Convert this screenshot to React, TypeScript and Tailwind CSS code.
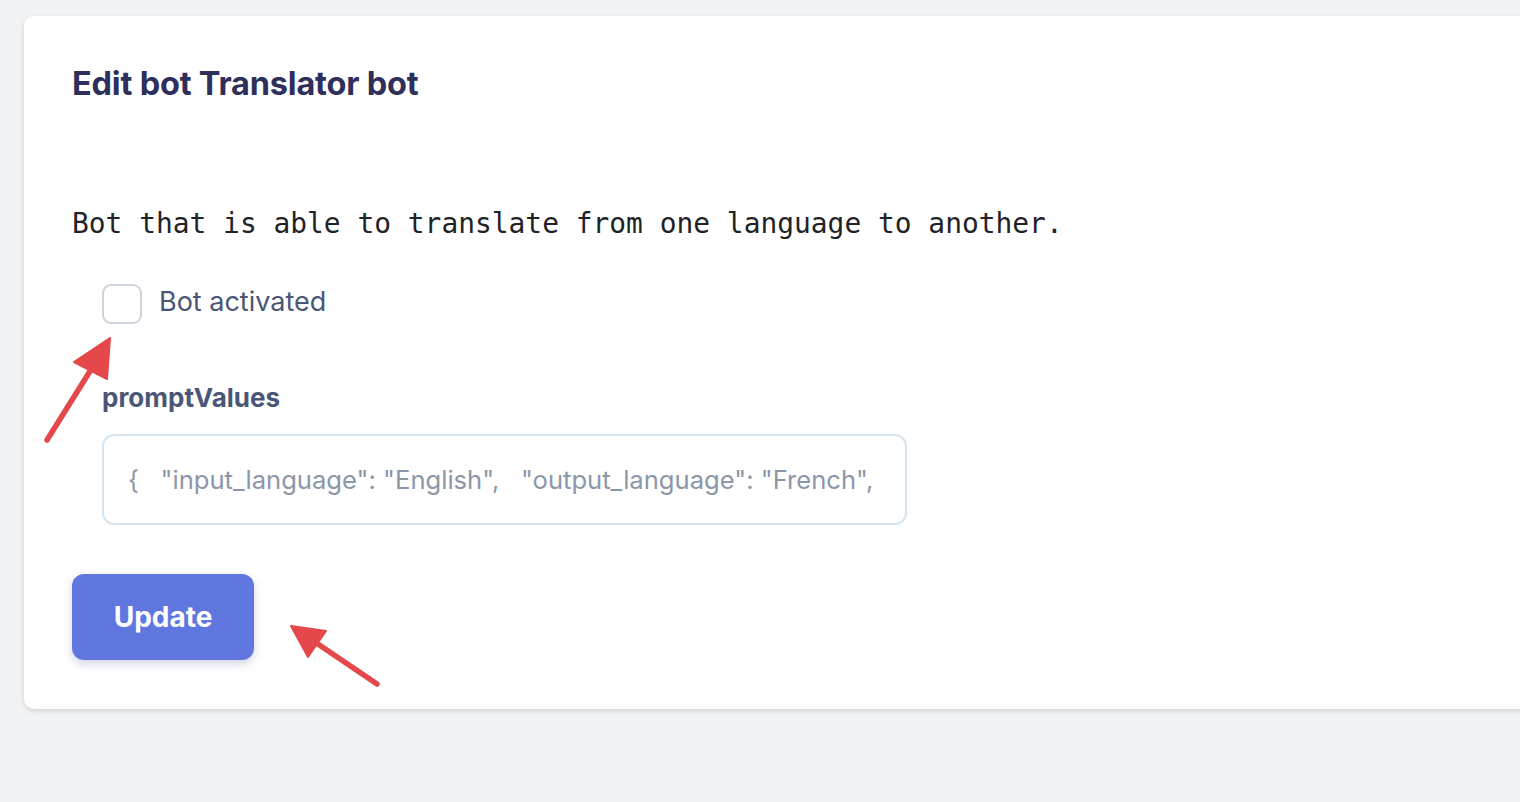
export default function App() {
  return (
    <div className="relative min-h-[802px] w-full overflow-hidden bg-[#f2f3f5] pl-[24px] pt-[16px] font-['Inter',sans-serif]">
      <div className="w-[1540px] rounded-[10px] bg-white pb-[49px] pl-[48px] pt-[46px] shadow-[0_2px_5px_rgba(0,0,0,0.14)]">
        {/* Header */}
        <h1 className="text-[32.5px] font-bold leading-[44px] tracking-[-0.2px] text-[#2e2f5a]">Edit bot Translator bot</h1>

        <p className="mt-[98px] font-['DejaVu_Sans_Mono',monospace] text-[27.9px] leading-[40px] text-[#1f2328]">
          Bot that is able to translate from one language to another.
        </p>

        <div className="pl-[30px]">
          <label className="mt-[40px] flex items-start gap-[17px]">
            <span className="block h-[40px] w-[40px] rounded-[9px] border-2 border-[#cfd5de] bg-white" />
            <span className="text-[27px] leading-[36px] text-[#4b5677]">Bot activated</span>
          </label>

          <p className="mt-[56px] text-[26px] font-bold leading-[36px] text-[#4b5677]">promptValues</p>

          <div className="mt-[18px] flex h-[91px] w-[805px] items-center rounded-[12px] border-2 border-[#d6e4f0] px-[24px]">
            <span className="whitespace-pre pt-[1px] text-[25.6px] text-[#8b97a9]">{'{   "input_language": "English",   "output_language": "French",'}</span>
          </div>
        </div>

        <button className="mt-[49px] flex h-[86px] w-[182px] items-center justify-center rounded-[12px] bg-[#6077df] text-[28px] font-bold text-white shadow-[0_4px_10px_rgba(60,70,140,0.22)]">
          Update
        </button>
      </div>

      {/* annotation arrows */}
      <svg className="pointer-events-none absolute left-0 top-0" width="1520" height="802">
        <g fill="#e5484b" stroke="#e5484b" strokeLinecap="round" strokeLinejoin="round">
          <line x1="47" y1="440" x2="97" y2="360" strokeWidth="5.5" />
          <polygon points="110,338 74,362 107,379" strokeWidth="2" />
          <line x1="377" y1="684" x2="312" y2="640" strokeWidth="5.5" />
          <polygon points="291,626 326,631 308,657" strokeWidth="2" />
        </g>
      </svg>
    </div>
  );
}
